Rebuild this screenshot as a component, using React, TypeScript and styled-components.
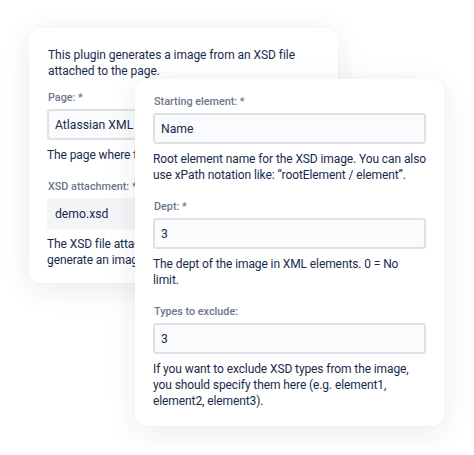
import React from 'react';
import styled, { createGlobalStyle } from 'styled-components';

const GlobalStyle = createGlobalStyle`
    html, body {
        margin: 0;
        padding: 0;
        background: #ffffff;
    }
    body {
        font-family: Roboto, "Liberation Sans", sans-serif;
        color: #172b4d;
        -webkit-font-smoothing: antialiased;
    }
`;

const Stage = styled.div`
    position: relative;
    width: 474px;
    height: 455px;
    overflow: hidden;
`;

const Card = styled.div`
    box-sizing: border-box;
    width: 309px;
    background: #ffffff;
    border-radius: 12px;
    box-shadow: 0 6px 30px rgba(9, 30, 66, 0.09), 0 0 2px rgba(9, 30, 66, 0.04);
    display: flex;
    flex-direction: column;
`;

const BackCard = styled(Card)`
    margin: 28px 0 0 29px;
    height: 255px;
    padding: 19px 19px 0 18px;
    overflow: hidden;
`;

// the second card sits over the first one
const FrontCard = styled(Card)`
    position: absolute;
    left: 135px;
    top: 79px;
    height: 347px;
    padding: 16px 17px 0 18px;
`;

const Intro = styled.p`
    margin: 0 0 12px 1px;
    font-size: 12px;
    line-height: 16px;
    letter-spacing: -0.05px;
`;

const Field = styled.div`
    display: flex;
    flex-direction: column;
    & + & {
        margin-top: 17px;
    }
`;

const Label = styled.label`
    font-size: 10.8px;
    font-weight: 500;
    color: #6b778c;
    line-height: 14px;
    margin: 0 0 4px 1px;
`;

const Input = styled.div<{ filled?: boolean }>`
    box-sizing: border-box;
    height: 31px;
    margin-right: 1px;
    display: flex;
    align-items: center;
    padding: 0 6px;
    font-size: 12.2px;
    color: #172b4d;
    white-space: nowrap;
    overflow: hidden;
    border-radius: 3px;
    background: ${props => (props.filled ? '#f4f5f7' : '#fafbfc')};
    border: 2px solid ${props => (props.filled ? '#f4f5f7' : '#dfe1e6')};
`;

const Help = styled.div`
    margin: 7px 0 0 0;
    font-size: 12px;
    line-height: 16px;
    letter-spacing: -0.1px;
    color: #172b4d;
`;

const App = () => (
    <>
        <GlobalStyle />
        <Stage>
            <BackCard>
                <Intro>
                    This plugin generates a image from an XSD file attached to the page.
                </Intro>
                <Field>
                    <Label>Page: *</Label>
                    <Input>Atlassian XML Schema Viewer</Input>
                    <Help>The page where the XSD file is attached.</Help>
                </Field>
                <Field>
                    <Label>XSD attachment: *</Label>
                    <Input filled>demo.xsd</Input>
                    <Help>
                        The XSD file attached to the page that is used to generate an image.
                    </Help>
                </Field>
            </BackCard>
            <FrontCard>
                <Field>
                    <Label>Starting element: *</Label>
                    <Input>Name</Input>
                    <Help>
                        Root element name for the XSD image. You can also
                        <br />
                        use xPath notation like: “rootElement / element”.
                    </Help>
                </Field>
                <Field>
                    <Label>Dept: *</Label>
                    <Input>3</Input>
                    <Help>
                        The dept of the image in XML elements. 0 = No
                        <br />
                        limit.
                    </Help>
                </Field>
                <Field>
                    <Label>Types to exclude:</Label>
                    <Input>3</Input>
                    <Help>
                        If you want to exclude XSD types from the image,
                        <br />
                        you should specify them here (e.g. element1,
                        <br />
                        element2, element3).
                    </Help>
                </Field>
            </FrontCard>
        </Stage>
    </>
);

export default App;
